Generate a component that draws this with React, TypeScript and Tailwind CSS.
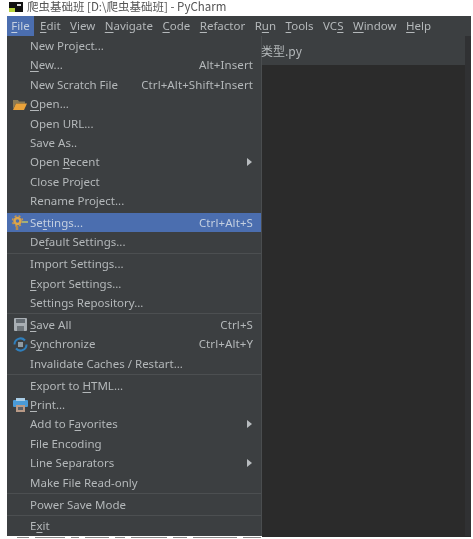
import type { ReactNode } from "react";

interface Item {
  label: ReactNode;
  shortcut?: string;
  arrow?: boolean;
  icon?: ReactNode;
  active?: boolean;
}

const U = ({ children }: { children: string }) => <span className="underline underline-offset-2">{children}</span>;

const FolderIcon = () => (
  <svg width="16" height="14" viewBox="0 0 16 14">
    <path d="M1 3h5l1 1.500h6v2H4L1 12z" fill="#8a7a55" />
    <path d="M4 6.500h11L12 13H1z" fill="#eba33a" />
  </svg>
);

const GearIcon = () => (
  <svg width="18" height="16" viewBox="0 0 18 16" fill="none">
    <circle cx="6.500" cy="6" r="3" stroke="#dca54a" strokeWidth="2.500" />
    <circle cx="6.500" cy="6" r="5" stroke="#c9964a" strokeWidth="1.500" strokeDasharray="2 2" />
    <path d="M6 11v4" stroke="#b58a4a" strokeWidth="2.500" />
    <path d="M11 7h6" stroke="#a3ad78" strokeWidth="2" />
  </svg>
);

const SaveIcon = () => (
  <svg width="13" height="13" viewBox="0 0 13 13">
    <rect width="13" height="13" rx="1" fill="#a9afb4" />
    <rect x="2" y="1" width="9" height="4" fill="#656c72" />
    <rect x="3" y="8" width="7" height="5" fill="#70777c" />
  </svg>
);

const SyncIcon = () => (
  <svg width="15" height="15" viewBox="0 0 15 15" fill="none">
    <path d="M1.500 7.500a6 6 0 0 1 10.500-4" stroke="#2f7fbd" strokeWidth="2" />
    <path d="M13.500 7.500a6 6 0 0 1-10.500 4" stroke="#2f7fbd" strokeWidth="2" />
    <rect x="5" y="5" width="5" height="5" fill="#8f9ba3" />
  </svg>
);

const PrintIcon = () => (
  <svg width="15" height="14" viewBox="0 0 15 14">
    <rect y="2" width="15" height="7" rx="1" fill="#4a9bd8" />
    <rect x="3" y="0" width="9" height="3" fill="#a9cde6" />
    <rect x="3" y="7" width="9" height="7" fill="#b99a86" />
    <rect x="5" y="9" width="5" height="3" fill="#59616a" />
  </svg>
);

const groups: Item[][] = [
  [
    { label: "New Project..." },
    { label: <><U>N</U>ew...</>, shortcut: "Alt+Insert" },
    { label: "New Scratch File", shortcut: "Ctrl+Alt+Shift+Insert" },
    { label: <><U>O</U>pen...</>, icon: <FolderIcon /> },
    { label: "Open URL..." },
    { label: "Save As.." },
    { label: <>Open <U>R</U>ecent</>, arrow: true },
    { label: "Close Project" },
    { label: "Rename Project..." },
  ],
  [
    { label: <>Se<U>t</U>tings...</>, shortcut: "Ctrl+Alt+S", icon: <GearIcon />, active: true },
    { label: <>De<U>f</U>ault Settings...</> },
  ],
  [
    { label: "Import Settings..." },
    { label: <><U>E</U>xport Settings...</> },
    { label: "Settings Repository..." },
  ],
  [
    { label: <><U>S</U>ave All</>, shortcut: "Ctrl+S", icon: <SaveIcon /> },
    { label: <>S<U>y</U>nchronize</>, shortcut: "Ctrl+Alt+Y", icon: <SyncIcon /> },
    { label: "Invalidate Caches / Restart..." },
  ],
  [
    { label: <>Export to <U>H</U>TML...</> },
    { label: <><U>P</U>rint...</>, icon: <PrintIcon /> },
    { label: <>Add to F<U>a</U>vorites</>, arrow: true },
    { label: "File Encoding" },
    { label: "Line Separators", arrow: true },
    { label: "Make File Read-only" },
  ],
  [{ label: "Power Save Mode" }],
  [{ label: <>E<U>x</U>it</> }],
];

const menus: ReactNode[] = [
  <><U>E</U>dit</>,
  <><U>V</U>iew</>,
  <><U>N</U>avigate</>,
  <><U>C</U>ode</>,
  <><U>R</U>efactor</>,
  <>R<U>u</U>n</>,
  <><U>T</U>ools</>,
  <>VC<U>S</U></>,
  <><U>W</U>indow</>,
  <><U>H</U>elp</>,
];

const bottomSpecks = [12, 30, 8, 24, 10, 36, 14, 44, 18];

function MenuRow({ item }: { item: Item }) {
  return (
    <div className={`flex h-[19.4px] items-center pr-[8px] ${item.active ? "bg-[#4b6eaf] text-[#c3cfe0]" : ""}`}>
      <span className="flex w-[23px] shrink-0 justify-center pl-[3px]">{item.icon}</span>
      <span className="flex-1 whitespace-nowrap">{item.label}</span>
      {item.shortcut && <span className="whitespace-nowrap tracking-[0.1px]">{item.shortcut}</span>}
      {item.arrow && <span className="mr-[1px] h-0 w-0 border-y-[4px] border-l-[5px] border-y-transparent border-l-[#b8bcbf]" />}
    </div>
  );
}

export default function App() {
  return (
    <div className="h-[539px] w-[473px] overflow-hidden bg-white font-['Noto_Sans','Open_Sans',sans-serif] text-[11.5px] text-[#b4b8ba] [filter:blur(0.35px)]">
      <div className="flex h-4 items-start gap-1 pl-[9px] text-[11.5px] leading-[12px] text-[#555]">
        <svg className="mt-[2px]" width="14" height="10" viewBox="0 0 14 10">
          <rect width="14" height="10" fill="#111" />
          <rect x="0" y="6" width="6" height="4" fill="#b7d43a" />
          <rect x="8" y="2" width="4" height="2" fill="#ddd" />
        </svg>
        <span className="whitespace-nowrap font-['Noto_Sans_CJK_SC','Noto_Sans',sans-serif]">爬虫基础班 [D:\爬虫基础班] - PyCharm</span>
      </div>

      <div className="ml-[7px] flex h-5 w-[464px] items-center bg-[#3c3f41]">
        <span className="flex h-full w-[27px] items-center justify-center bg-[#4b6eaf] text-[#c3cfe0]"><U>F</U>ile</span>
        <div className="flex items-center gap-[9.5px] pl-[6px]">
          {menus.map((menu, i) => (
            <span key={i} className="whitespace-nowrap">{menu}</span>
          ))}
        </div>
      </div>

      <div className="ml-[7px] flex h-[500px] w-[464px]">
        <div className="w-[255px] shrink-0 border-r border-[#4a4d4f] bg-[#3c3f41]">
          {groups.map((group, i) => (
            <div
              key={i}
              className={i === 0 ? "" : i === 1 ? "pt-[2.5px]" : "mt-[0.75px] border-t border-[#4c4f51] pt-[0.75px]"}
            >
              {group.map((item, j) => (
                <MenuRow key={j} item={item} />
              ))}
            </div>
          ))}
        </div>
        <div className="flex flex-1 flex-col border-r-[6px] border-[#303133]">
          <div className="flex h-[29px] items-center bg-[#3c3f41] font-['Noto_Sans_CJK_SC','Noto_Sans',sans-serif] text-[12px]">
            <span className="-ml-[1px]">类型.py</span>
          </div>
          <div className="flex-1 bg-[#2b2b2b]" />
        </div>
      </div>

      <div className="ml-[7px] flex h-[3px] w-[464px]">
        <div className="flex w-[255px] items-start gap-[6px] pl-[10px] pt-[1px]">
          {bottomSpecks.map((w, i) => (
            <span key={i} className="h-[1px] bg-[#8a8a8a]" style={{ width: w }} />
          ))}
        </div>
        <div className="h-[1px] flex-1 bg-[#2b2b2b]" />
      </div>
    </div>
  );
}
